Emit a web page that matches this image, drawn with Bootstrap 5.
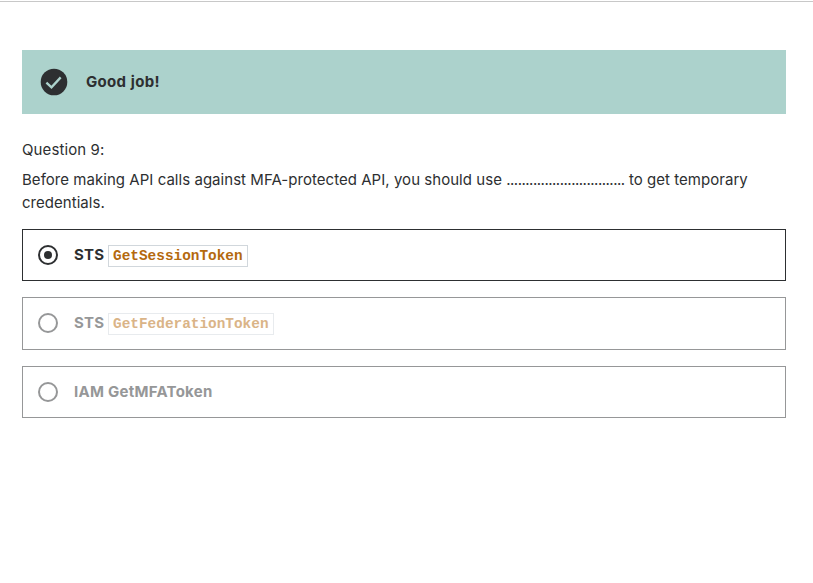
<!DOCTYPE html>
<html lang="en">
<head>
<meta charset="utf-8">
<meta name="viewport" content="width=device-width, initial-scale=1">
<title>Quiz question</title>
<link href="https://cdn.jsdelivr.net/npm/bootstrap@5.3.0/dist/css/bootstrap.min.css" rel="stylesheet">
<style>
body { font-family: Inter, "Liberation Sans", sans-serif; font-size: 15px; line-height: 22.4px; color: #2d2f31; }
.top-rule { height: 2px; border-bottom: 1px solid #c8c8c8; }
.quiz { padding: 48px 27px 0 22px; }
.result { height: 64px; padding-left: 18px; background: #acd2cc; gap: 18px; letter-spacing: .3px; word-spacing: .6px; }
.result svg { width: 28px; height: 28px; }
.prompt { margin-top: 25px; letter-spacing: .04px; }
.prompt p { margin: 0; }
.prompt .number { margin-bottom: 7.8px; letter-spacing: .1px; }
.dots { letter-spacing: -.5px; }
.answers { gap: 16px; margin-top: 14.8px; letter-spacing: .26px; }
.answer { height: 52.4px; padding-left: 15px; gap: 16px; border: 1px solid #2d2f31; }
.answer.locked { border-color: #969798; color: #969798; }
.answer svg { width: 20px; height: 20px; }
.answer code { font: bold 14.4px/20px "Liberation Mono", monospace; letter-spacing: 0; color: #b4690e; border: 1px solid #d1d7dc; padding: 0 4px; margin-left: 3.65px; display: inline-block; }
.answer.locked code { color: #dab487; border-color: #e8ebee; }
</style>
</head>
<body>
<div class="top-rule"></div>
<main class="quiz">
  <div class="result d-flex align-items-center fw-bold" role="alert">
    <svg viewBox="0 0 28 28" aria-hidden="true"><circle cx="14" cy="14" r="13.3" fill="#2d2f31"/><path d="M6.4 14.6 11.5 19.4 20.7 9.4" fill="none" stroke="#acd2cc" stroke-width="2.3"/></svg>
    <span>Good job!</span>
  </div>
  <div class="prompt">
    <p class="number">Question 9:</p>
    <p>Before making API calls against MFA-protected API, you should use <span class="dots">...............................</span> to get temporary credentials.</p>
  </div>
  <div class="answers d-flex flex-column fw-bold">
    <div class="answer d-flex align-items-center">
      <svg viewBox="0 0 20 20" aria-hidden="true"><circle cx="10" cy="10" r="9" fill="none" stroke="#2d2f31" stroke-width="2"/><circle cx="10" cy="10" r="4" fill="#2d2f31"/></svg>
      <div><span>STS</span><code>GetSessionToken</code></div>
    </div>
    <div class="answer locked d-flex align-items-center">
      <svg viewBox="0 0 20 20" aria-hidden="true"><circle cx="10" cy="10" r="9" fill="none" stroke="#969798" stroke-width="2"/></svg>
      <div><span>STS</span><code>GetFederationToken</code></div>
    </div>
    <div class="answer locked d-flex align-items-center">
      <svg viewBox="0 0 20 20" aria-hidden="true"><circle cx="10" cy="10" r="9" fill="none" stroke="#969798" stroke-width="2"/></svg>
      <div>IAM GetMFAToken</div>
    </div>
  </div>
</main>
<script src="https://cdn.jsdelivr.net/npm/bootstrap@5.3.0/dist/js/bootstrap.bundle.min.js"></script>
</body>
</html>
